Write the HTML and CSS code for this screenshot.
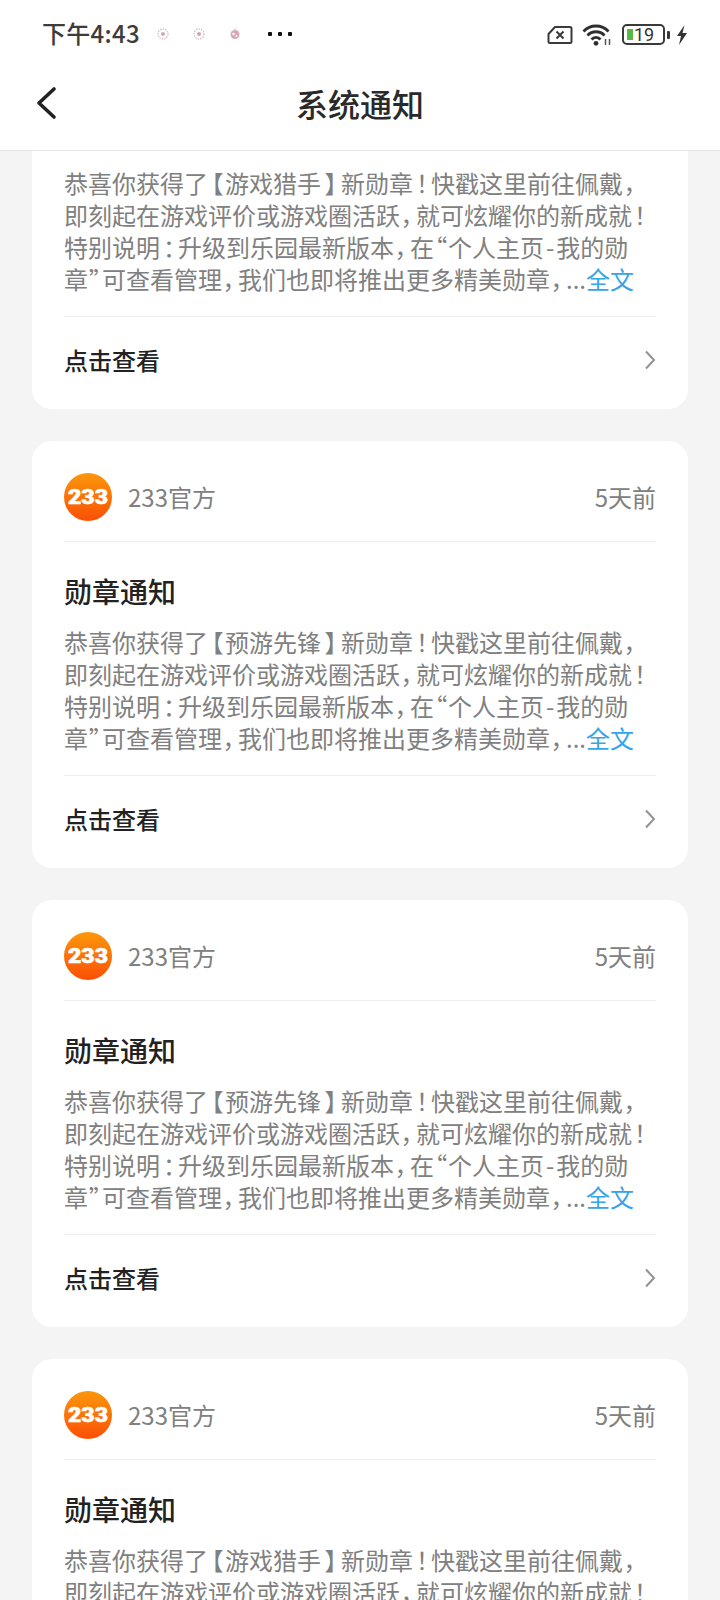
FILE: index.html
```html
<!DOCTYPE html>
<html lang="zh-CN">
<head>
<meta charset="utf-8">
<title>系统通知</title>
<link rel="stylesheet" href="styles.css">
</head>
<body>
<div class="app">
  <header class="top">
    <div class="status">
      <div class="status-left">
        <span class="clock">下午4:43</span>
        <svg class="notif" viewBox="0 0 14 14"><circle cx="7" cy="7" r="5" fill="none" stroke="#d9c2cc" stroke-width="1.4" stroke-dasharray="1.5 1"/><circle cx="7" cy="7" r="2" fill="#d3a9bb"/></svg>
        <svg class="notif" viewBox="0 0 14 14"><circle cx="7" cy="7" r="5" fill="none" stroke="#d9c2cc" stroke-width="1.4" stroke-dasharray="1.5 1"/><circle cx="7" cy="7" r="2" fill="#cfa5b6"/></svg>
        <svg class="notif" viewBox="0 0 14 14"><circle cx="7" cy="7.5" r="4.5" fill="#d7a8ba"/><circle cx="5.5" cy="7" r="1.2" fill="#fff"/><circle cx="8.5" cy="9" r="1" fill="#fff"/><path d="M7 1v2" stroke="#d9c2cc" stroke-width="1"/></svg>
        <span class="more"><i></i><i></i><i></i></span>
      </div>
      <div class="status-right">
        <svg class="ic-sim" viewBox="0 0 26 20"><path d="M8 2h15a1.500 1.500 0 0 1 1.500 1.500v13a1.500 1.500 0 0 1-1.500 1.500H3a1.500 1.500 0 0 1-1.500-1.500V9z" fill="none" stroke="#3a3a3a" stroke-width="2" stroke-linejoin="round"/><path d="M9.500 6.500l7 7m0-7l-7 7" stroke="#3a3a3a" stroke-width="2"/></svg>
        <svg class="ic-wifi" viewBox="0 0 30 22"><path d="M1.500 7.500a17 17 0 0 1 25 0M5.500 11.500a11.500 11.500 0 0 1 17 0M9.500 15.500a6 6 0 0 1 9 0" fill="none" stroke="#2f2f2f" stroke-width="2.800"/><circle cx="14" cy="19.300" r="2.400" fill="#2f2f2f"/><path d="M23.500 15v6M27.500 15v6" stroke="#555" stroke-width="1.500"/></svg>
        <span class="battery"><span class="battery-fill"></span><span class="battery-num">19</span></span>
        <span class="battery-cap"></span>
        <svg class="ic-bolt" viewBox="0 0 12 20"><path d="M8.500 0L1 11h4l-2 9 8-12H6.500z" fill="#333"/></svg>
      </div>
    </div>
    <div class="nav">
      <svg class="back" viewBox="0 0 22 34"><path d="M19 3L4 17l15 14" fill="none" stroke="#222" stroke-width="3.600" stroke-linecap="round" stroke-linejoin="round"/></svg>
      <h1 class="nav-title">系统通知</h1>
    </div>
  </header>

  <main class="feed">
    <div class="feed-track">
      <article class="card">
        <div class="card-head">
          <svg class="logo" viewBox="0 0 48 48"><use href="#logo-233"/></svg>
          <span class="sender">233官方</span>
          <span class="when">5天前</span>
        </div>
        <h2 class="card-title">勋章通知</h2>
        <p class="card-body">恭喜你获得了<span class="open">【</span>游戏猎手<span class="close">】</span>新勋章<span class="stop">！</span>快戳这里前往佩戴<span class="comma">，</span><br>即刻起在游戏评价或游戏圈活跃<span class="comma">，</span>就可炫耀你的新成就<span class="stop-end">！</span><br>特别说明<span class="stop">：</span>升级到乐园最新版本<span class="comma">，</span>在<span class="quote">“</span>个人主页<span class="dash">-</span>我的勋<br>章<span class="quote">”</span>可查看管理<span class="comma">，</span>我们也即将推出更多精美勋章<span class="comma">，</span>...<a class="more-link">全文</a></p>
        <div class="card-foot"><span>点击查看</span><svg class="chev" viewBox="0 0 12 20"><path d="M2 1.500L10 10l-8 8.500" fill="none" stroke="#929292" stroke-width="2"/></svg></div>
      </article>

      <article class="card">
        <div class="card-head">
          <svg class="logo" viewBox="0 0 48 48"><use href="#logo-233"/></svg>
          <span class="sender">233官方</span>
          <span class="when">5天前</span>
        </div>
        <h2 class="card-title">勋章通知</h2>
        <p class="card-body">恭喜你获得了<span class="open">【</span>预游先锋<span class="close">】</span>新勋章<span class="stop">！</span>快戳这里前往佩戴<span class="comma">，</span><br>即刻起在游戏评价或游戏圈活跃<span class="comma">，</span>就可炫耀你的新成就<span class="stop-end">！</span><br>特别说明<span class="stop">：</span>升级到乐园最新版本<span class="comma">，</span>在<span class="quote">“</span>个人主页<span class="dash">-</span>我的勋<br>章<span class="quote">”</span>可查看管理<span class="comma">，</span>我们也即将推出更多精美勋章<span class="comma">，</span>...<a class="more-link">全文</a></p>
        <div class="card-foot"><span>点击查看</span><svg class="chev" viewBox="0 0 12 20"><path d="M2 1.500L10 10l-8 8.500" fill="none" stroke="#929292" stroke-width="2"/></svg></div>
      </article>

      <article class="card">
        <div class="card-head">
          <svg class="logo" viewBox="0 0 48 48"><use href="#logo-233"/></svg>
          <span class="sender">233官方</span>
          <span class="when">5天前</span>
        </div>
        <h2 class="card-title">勋章通知</h2>
        <p class="card-body">恭喜你获得了<span class="open">【</span>预游先锋<span class="close">】</span>新勋章<span class="stop">！</span>快戳这里前往佩戴<span class="comma">，</span><br>即刻起在游戏评价或游戏圈活跃<span class="comma">，</span>就可炫耀你的新成就<span class="stop-end">！</span><br>特别说明<span class="stop">：</span>升级到乐园最新版本<span class="comma">，</span>在<span class="quote">“</span>个人主页<span class="dash">-</span>我的勋<br>章<span class="quote">”</span>可查看管理<span class="comma">，</span>我们也即将推出更多精美勋章<span class="comma">，</span>...<a class="more-link">全文</a></p>
        <div class="card-foot"><span>点击查看</span><svg class="chev" viewBox="0 0 12 20"><path d="M2 1.500L10 10l-8 8.500" fill="none" stroke="#929292" stroke-width="2"/></svg></div>
      </article>

      <article class="card">
        <div class="card-head">
          <svg class="logo" viewBox="0 0 48 48"><use href="#logo-233"/></svg>
          <span class="sender">233官方</span>
          <span class="when">5天前</span>
        </div>
        <h2 class="card-title">勋章通知</h2>
        <p class="card-body">恭喜你获得了<span class="open">【</span>游戏猎手<span class="close">】</span>新勋章<span class="stop">！</span>快戳这里前往佩戴<span class="comma">，</span><br>即刻起在游戏评价或游戏圈活跃<span class="comma">，</span>就可炫耀你的新成就<span class="stop-end">！</span><br>特别说明<span class="stop">：</span>升级到乐园最新版本<span class="comma">，</span>在<span class="quote">“</span>个人主页<span class="dash">-</span>我的勋<br>章<span class="quote">”</span>可查看管理<span class="comma">，</span>我们也即将推出更多精美勋章<span class="comma">，</span>...<a class="more-link">全文</a></p>
        <div class="card-foot"><span>点击查看</span><svg class="chev" viewBox="0 0 12 20"><path d="M2 1.500L10 10l-8 8.500" fill="none" stroke="#929292" stroke-width="2"/></svg></div>
      </article>
    </div>
  </main>
</div>

<!-- shared brand mark: orange disc with the chunky 233 wordmark -->
<svg class="defs" width="0" height="0">
  <defs>
    <linearGradient id="disc" x1="0.5" y1="0" x2="0.5" y2="1">
      <stop offset="0" stop-color="#fb980c"/>
      <stop offset="1" stop-color="#fb4f05"/>
    </linearGradient>
    <g id="logo-233">
      <circle cx="24" cy="24" r="24" fill="url(#disc)"/>
      <text class="logo-mark" x="4" y="31" textLength="40" lengthAdjust="spacingAndGlyphs">233</text>
    </g>
  </defs>
</svg>
</body>
</html>
```
FILE: styles.css
```css
* { box-sizing: border-box; }

html, body {
  margin: 0;
  padding: 0;
  background: #f4f4f4;
}

body {
  font-family: "Noto Sans CJK SC", "Noto Sans", sans-serif;
  color: #222;
}

.app {
  width: 720px;
  height: 1600px;
  overflow: hidden;
  display: flex;
  flex-direction: column;
}

.defs { position: absolute; }

/* top bar */
.top {
  flex: none;
  height: 151px;
  background: #fff;
  border-bottom: 1px solid #e4e4e4;
}

.status {
  height: 68px;
  display: flex;
  justify-content: space-between;
  align-items: center;
  padding: 0 42px;
}

.status-left,
.status-right {
  display: flex;
  align-items: center;
}

.clock {
  font-size: 24px;
  font-weight: 500;
  line-height: 32px;
  color: #3c3c3c;
  letter-spacing: 0.3px;
  margin: -2px 16px 0 0;
}

.notif {
  width: 14px;
  height: 14px;
  margin-right: 22px;
}

.more {
  display: flex;
  gap: 6px;
  margin-left: 4px;
}

.more i {
  width: 4px;
  height: 4px;
  border-radius: 1px;
  background: #111;
}

.status-right {
  margin: 1px -10px 0 0;
}

.ic-sim { width: 26px; height: 20px; margin-right: 9px; }
.ic-wifi { width: 30px; height: 22px; margin-right: 10px; }

.battery {
  width: 43px;
  height: 21px;
  border: 2.500px solid #3a3a3a;
  border-radius: 5px;
  display: flex;
  align-items: center;
  padding-left: 3px;
}

.battery-fill {
  width: 6px;
  height: 11px;
  background: #58b947;
}

.battery-num {
  font-family: "Roboto", sans-serif;
  font-size: 18px;
  line-height: 16px;
  color: #333;
  margin-left: 1px;
}

.battery-cap {
  width: 3px;
  height: 8px;
  margin: 0 6px 0 2px;
  background: #3a3a3a;
  border-radius: 1px;
}

.ic-bolt { width: 12px; height: 20px; }

.nav {
  height: 82px;
  position: relative;
  display: flex;
  align-items: center;
  justify-content: center;
  padding-bottom: 12px;
}

.back {
  position: absolute;
  left: 35px;
  top: 18px;
  width: 22px;
  height: 34px;
}

.nav-title {
  margin: 0;
  font-size: 32px;
  font-weight: 500;
  color: #2a2a2a;
  line-height: 44px;
}

/* notification list */
.feed {
  flex: 1;
  overflow: hidden;
}

.feed-track {
  display: flex;
  flex-direction: column;
  gap: 32px;
  padding: 0 32px;
  margin-top: -169px;
}

.card {
  flex: none;
  height: 427px;
  background: #fff;
  border-radius: 20px;
  padding: 0 32px;
  display: flex;
  flex-direction: column;
}

.card-head {
  height: 101px;
  padding-top: 10px;
  display: flex;
  align-items: center;
  border-bottom: 1px solid #ededed;
}

.logo {
  width: 48px;
  height: 48px;
  margin: 2px 16px 0 0;
}

.logo-mark {
  font-family: "Roboto", sans-serif;
  font-size: 20px;
  font-weight: 900;
  fill: #fff;
  stroke: #fff;
  stroke-width: 0.6px;
}

.sender {
  font-size: 24px;
  color: #808080;
  flex: 1;
}

.when {
  font-size: 24px;
  color: #808080;
}

.card-title {
  margin: 0;
  height: 70px;
  padding-top: 28px;
  font-size: 28px;
  font-weight: 500;
  line-height: 42px;
  color: #222;
}

.card-body {
  margin: 14px 0 0;
  font-size: 24px;
  line-height: 32px;
  color: #808080;
  white-space: nowrap;
  font-feature-settings: "palt";
}

/* roomier spacing around the proportional punctuation */
.open { margin-left: 3px; margin-right: 2px; }
.close { margin: 0 4px; }
.stop { margin: 0 3px; }
.stop-end { margin-left: 2px; }
.comma { margin: 0 2px; }
.quote { margin: 0 1px; }
.dash { margin: 0 2px; }

.more-link { color: #35a4e8; }

.card-foot {
  margin-top: 21px;
  flex: 1;
  border-top: 1px solid #ededed;
  display: flex;
  justify-content: space-between;
  align-items: center;
  padding-bottom: 7px;
  font-size: 24px;
  font-weight: 500;
  color: #222;
}

.chev { width: 12px; height: 20px; }
```
